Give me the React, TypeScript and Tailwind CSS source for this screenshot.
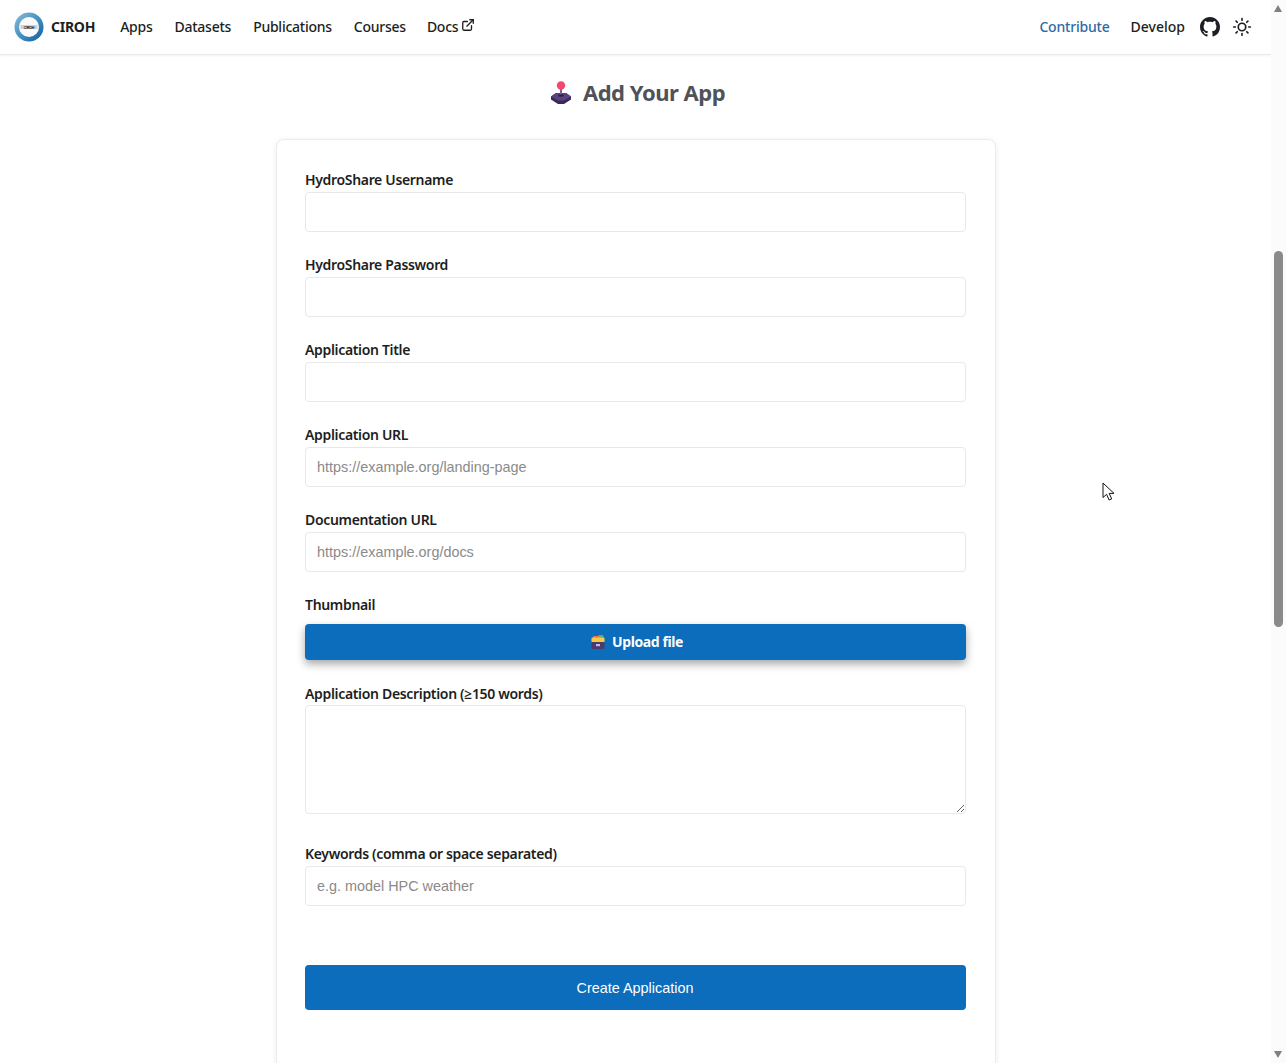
import { ExternalLink } from "lucide-react";

const navLinks = ["Apps", "Datasets", "Publications", "Courses"];

const sans = "font-['Noto_Sans','Open_Sans',sans-serif]";

const Logo = () => (
  <svg width="30" height="30" viewBox="0 0 30 30">
    <defs>
      <linearGradient id="ring" x1="0" y1="0" x2="1" y2="1">
        <stop offset="0" stopColor="#8dbcd8" />
        <stop offset="0.55" stopColor="#3f8dc0" />
        <stop offset="1" stopColor="#0c5a9c" />
      </linearGradient>
    </defs>
    <circle cx="15" cy="15" r="14.5" fill="url(#ring)" />
    <circle cx="15" cy="15" r="10" fill="#fafafa" />
    <rect x="6.5" y="13" width="17" height="4" fill="#d2d2d2" />
    <text x="15" y="16.5" textAnchor="middle" fontSize="3.6" fontWeight="700" fill="#111" fontFamily="Liberation Sans, sans-serif">CIROH</text>
  </svg>
);

const GithubIcon = () => (
  <svg width="20" height="20" viewBox="0 0 16 16" fill="#1b1f23">
    <path d="M8 0C3.58 0 0 3.58 0 8c0 3.54 2.29 6.53 5.47 7.59.4.07.55-.17.55-.38 0-.19-.01-.82-.01-1.49-2.01.37-2.53-.49-2.69-.94-.09-.23-.48-.94-.82-1.13-.28-.15-.68-.52-.01-.53.63-.01 1.08.58 1.23.82.72 1.21 1.87.87 2.33.66.07-.52.28-.87.51-1.07-1.78-.2-3.64-.89-3.64-3.95 0-.87.31-1.59.82-2.15-.08-.2-.36-1.02.08-2.12 0 0 .67-.21 2.2.82.64-.18 1.32-.27 2-.27s1.36.09 2 .27c1.53-1.04 2.2-.82 2.2-.82.44 1.1.16 1.92.08 2.12.51.56.82 1.27.82 2.15 0 3.07-1.87 3.75-3.65 3.95.29.25.54.73.54 1.48 0 1.07-.01 1.93-.01 2.2 0 .21.15.46.55.38A8.01 8.01 0 0 0 16 8c0-4.42-3.58-8-8-8z" />
  </svg>
);

const SunIcon = () => (
  <svg width="20" height="20" viewBox="0 0 24 24" fill="none" stroke="#1c1e21" strokeWidth="2" strokeLinecap="round">
    <circle cx="12" cy="12" r="4.5" />
    <path d="M12 2v2M12 20v2M2 12h2M20 12h2M4.9 4.9l1.4 1.4M17.7 17.7l1.4 1.4M4.9 19.1l1.4-1.4M17.7 6.3l1.4-1.4" />
  </svg>
);

const JoystickIcon = () => (
  <svg width="20" height="23" viewBox="0 0 20 23">
    <path d="M0 15.5 5 12h10l5 3.5v3L13 23H7l-7-4.500z" fill="#3a2a58" />
    <path d="M0 15.500 5 12h10l5 3.500L13 19.500H7z" fill="#5a4380" />
    <rect x="9" y="7" width="2" height="7.500" fill="#7a6592" />
    <ellipse cx="10" cy="14.500" rx="3" ry="1.300" fill="#2d2045" />
    <circle cx="10" cy="4.500" r="4.200" fill="#f0496f" />
  </svg>
);

const FileBoxIcon = () => (
  <svg width="14" height="14" viewBox="0 0 14 14">
    <rect x="7" y="0" width="5.5" height="4" rx="1" fill="#58b368" />
    <rect x="2" y="1" width="6.5" height="3" rx="0.5" fill="#ef6f4f" />
    <rect x="0.5" y="2.5" width="13" height="5" rx="1" fill="#f7c948" />
    <rect x="0.5" y="7" width="13" height="7" rx="1" fill="#4b3b6b" />
    <rect x="5" y="9" width="4" height="2.2" fill="#c9b8e8" />
  </svg>
);

const labelClass = `block pl-[0.5px] text-[14px] font-semibold tracking-[-0.33px] text-[#1c1e21] ${sans}`;

const Field = ({ label, placeholder }: { label: string; placeholder?: string }) => (
  <div className="mb-[12px]">
    <label className={`${labelClass} leading-[17px] mb-[4px]`}>{label}</label>
    <input
      placeholder={placeholder}
      className="block w-full h-[40px] px-[11.5px] bg-white border border-[#e8e8e8] rounded-[4px] text-[14.4px] font-['Liberation_Sans',sans-serif] placeholder:text-[#8a8a8a]"
    />
  </div>
);

const NavBar = () => (
  <nav className={`h-[55px] flex items-center justify-between pl-[14px] pr-[19px] bg-white border-b border-[#e9e9e9] shadow-[0_1px_2px_rgba(0,0,0,0.05)] ${sans}`}>
    <div className="flex items-center text-[14px] font-medium text-[#1c1e21] tracking-[-0.25px]">
      <Logo />
      <span className="ml-[7px] mr-[25px] pb-[2px] font-bold">CIROH</span>
      <div className="flex items-center gap-[22px] pb-[2px]">
        {navLinks.map((l) => (
          <span key={l}>{l}</span>
        ))}
        <span className="-ml-[1px] flex items-center gap-[3px]">
          Docs
          <ExternalLink className="h-[14px] w-[14px] -mt-[3px]" strokeWidth={2.25} />
        </span>
      </div>
    </div>
    <div className="flex items-center text-[14px] font-medium text-[#1c1e21]">
      <span className="pb-[2px] text-[#2f6aa8] tracking-[-0.2px]">Contribute</span>
      <span className="ml-[21px] pb-[2px]">Develop</span>
      <span className="ml-[15px]"><GithubIcon /></span>
      <span className="ml-[12px]"><SunIcon /></span>
    </div>
  </nav>
);

const Scrollbar = () => (
  <div className="relative w-[15px] h-full bg-[#fbfbfb] shrink-0">
    <div className="absolute top-[5px] left-[3px] w-0 h-0 border-x-[4.5px] border-x-transparent border-b-[7px] border-b-[#7f7f7f]" />
    <div className="absolute top-[251px] left-[3px] w-[9px] h-[376px] rounded-[5px] bg-[#8a8a8a]" />
    <div className="absolute bottom-[5px] left-[3px] w-0 h-0 border-x-[4.5px] border-x-transparent border-t-[7px] border-t-[#7f7f7f]" />
  </div>
);

const Cursor = () => (
  <svg className="absolute left-[1102px] top-[482px]" width="14" height="20" viewBox="0 0 14 20">
    <path d="M1 1v14.5l3.6-3.2 2.5 5.7 2.6-1.1-2.5-5.5H12z" fill="#fff" stroke="#111" strokeWidth="1" strokeLinejoin="round" />
  </svg>
);

export default function App() {
  return (
    <div className="relative flex h-[1063px] overflow-hidden bg-white">
      <div className="flex-1 min-w-0">
        <NavBar />
        <h1 className={`mt-[17px] h-[40px] pl-[5px] flex items-center justify-center gap-[12px] text-[22px] tracking-[-0.5px] font-bold text-[#4f5359] ${sans}`}>
          <JoystickIcon />
          Add Your App
        </h1>
        <div className="w-[720px] h-[930px] mx-auto mt-[27px] pl-[28px] pr-[29px] pt-[31px] bg-white border border-[#ececec] rounded-[8px] shadow-[0_1px_6px_rgba(0,0,0,0.08)]">
          <Field label="HydroShare Username" />
          <div className="mt-[24px]"><Field label="HydroShare Password" /></div>
          <div className="mt-[24px]"><Field label="Application Title" /></div>
          <div className="mt-[24px]"><Field label="Application URL" placeholder="https://example.org/landing-page" /></div>
          <div className="mt-[24px]"><Field label="Documentation URL" placeholder="https://example.org/docs" /></div>
          <div className="mt-[24px]">
            <label className={`${labelClass} leading-[17px] mb-[11px]`}>Thumbnail</label>
            <button className={`w-full h-[36px] pl-[4px] pb-[1px] flex items-center justify-center gap-[7px] rounded-[4px] bg-[#0b6dbb] text-white text-[14px] font-bold tracking-[-0.4px] shadow-[0_4px_8px_rgba(0,0,0,0.35)] ${sans}`}>
              <FileBoxIcon />
              Upload file
            </button>
          </div>
          <div className="mt-[24px]">
            <label className={`${labelClass} leading-[19px] mb-[2px]`}>Application Description (≥150 words)</label>
            <textarea className="block w-full h-[109px] bg-white border border-[#e8e8e8] rounded-[4px]" />
          </div>
          <div className="mt-[31px]"><Field label="Keywords (comma or space separated)" placeholder="e.g. model HPC weather" /></div>
          <button className="w-full h-[45px] mt-[47px] pt-[2px] rounded-[4px] bg-[#0b6dbb] text-white text-[14.4px] font-['Liberation_Sans',sans-serif]">
            Create Application
          </button>
        </div>
      </div>
      <Scrollbar />
      <Cursor />
    </div>
  );
}
